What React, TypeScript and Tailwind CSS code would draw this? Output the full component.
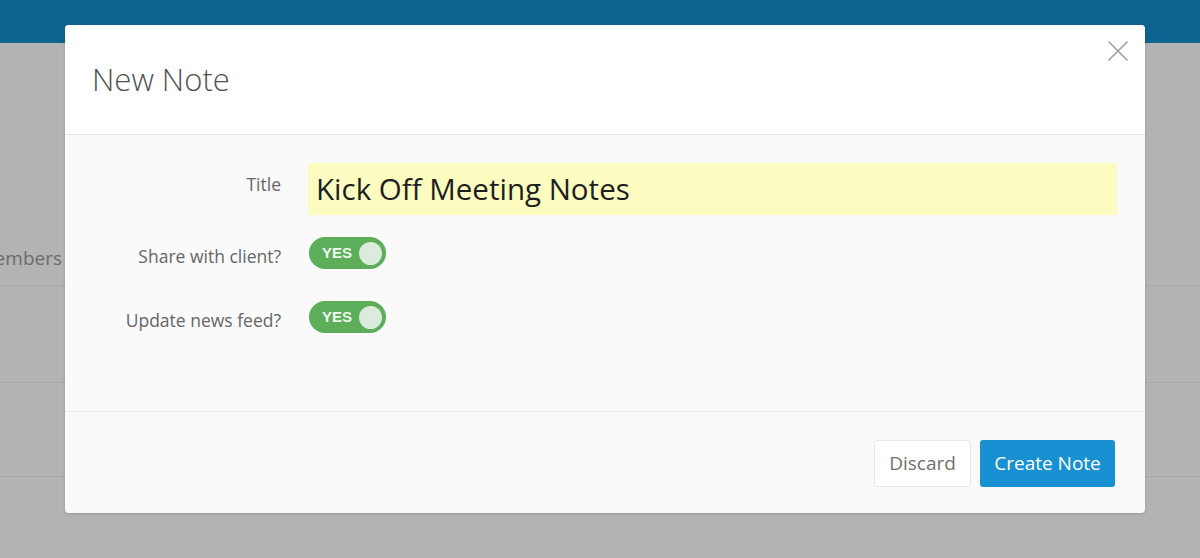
import React from "react";

function Toggle() {
  return (
    <div className="flex h-[32px] w-[77px] items-center justify-between rounded-full bg-[#5cae5a] pl-[13px] pr-[4px]">
      <span
        className="text-[15px] font-bold text-[#f0f8f0]"
        style={{ fontFamily: '"Liberation Sans", Arial, sans-serif' }}
      >
        YES
      </span>
      <span className="h-[23px] w-[23px] rounded-full bg-[#dcecdc]" />
    </div>
  );
}

export default function App() {
  return (
    <div
      className="relative h-[558px] w-[1200px] overflow-hidden bg-[#b3b3b3]"
      style={{ fontFamily: '"Open Sans", "Liberation Sans", sans-serif' }}
    >
      <div className="h-[43px] bg-[#0e6490]" />
      <div className="flex flex-col">
        <div className="flex h-[243px] items-start border-b border-[#a8a8a8] pt-[201px]">
          <div className="flex w-[62px] justify-end whitespace-nowrap text-[19px] text-[#6b6b6b]">Members</div>
        </div>
        <div className="h-[97px] border-b border-[#a8a8a8]" />
        <div className="h-[94px] border-b border-[#a8a8a8]" />
      </div>

      <div className="absolute left-[65px] top-[25px] flex w-[1080px] flex-col overflow-hidden rounded-[4px] bg-[#fafafa] shadow-[0_1px_3px_rgba(0,0,0,0.15)]">
        <div className="relative flex h-[110px] items-center border-b border-[#e6e6e6] bg-white px-[27px]">
          <h2 className="text-[31px] font-light text-[#505050]">New Note</h2>
          <button className="absolute right-[17px] top-[16px] text-[#a8a8a8]">
            <svg width="20" height="20" viewBox="0 0 20 20" fill="none" stroke="currentColor" strokeWidth="1.6">
              <path d="M0.5 0.5 L19.5 19.5 M19.5 0.5 L0.5 19.5" />
            </svg>
          </button>
        </div>

        <div className="flex h-[277px] flex-col gap-[22px] border-b border-[#ececec] pt-[28px]">
          <div className="flex items-start">
            <label className="w-[216px] pt-[8px] text-right text-[17.5px] text-[#666]">Title</label>
            <div className="ml-[27px] flex h-[52px] w-[809px] items-center bg-[#fcfcc0] px-[8px] text-[29.5px] text-[#1e1e1e]">
              Kick Off Meeting Notes
            </div>
          </div>
          <div className="flex items-center">
            <label className="w-[216px] pt-[6px] text-right text-[17.5px] text-[#666]">Share with client?</label>
            <div className="ml-[28px]">
              <Toggle />
            </div>
          </div>
          <div className="mt-[10px] flex items-center">
            <label className="w-[216px] pt-[6px] text-right text-[17.5px] text-[#666]">Update news feed?</label>
            <div className="ml-[28px]">
              <Toggle />
            </div>
          </div>
        </div>

        <div className="flex h-[101px] items-center justify-end gap-[9px] pr-[30px] pt-[2px]">
          <button className="h-[47px] w-[97px] rounded-[3px] border border-[#e6e6e6] bg-white text-center text-[19px] text-[#707070]">
            Discard
          </button>
          <button className="h-[47px] w-[135px] rounded-[3px] bg-[#1890d2] text-center text-[19px] text-white">
            Create Note
          </button>
        </div>
      </div>
    </div>
  );
}
